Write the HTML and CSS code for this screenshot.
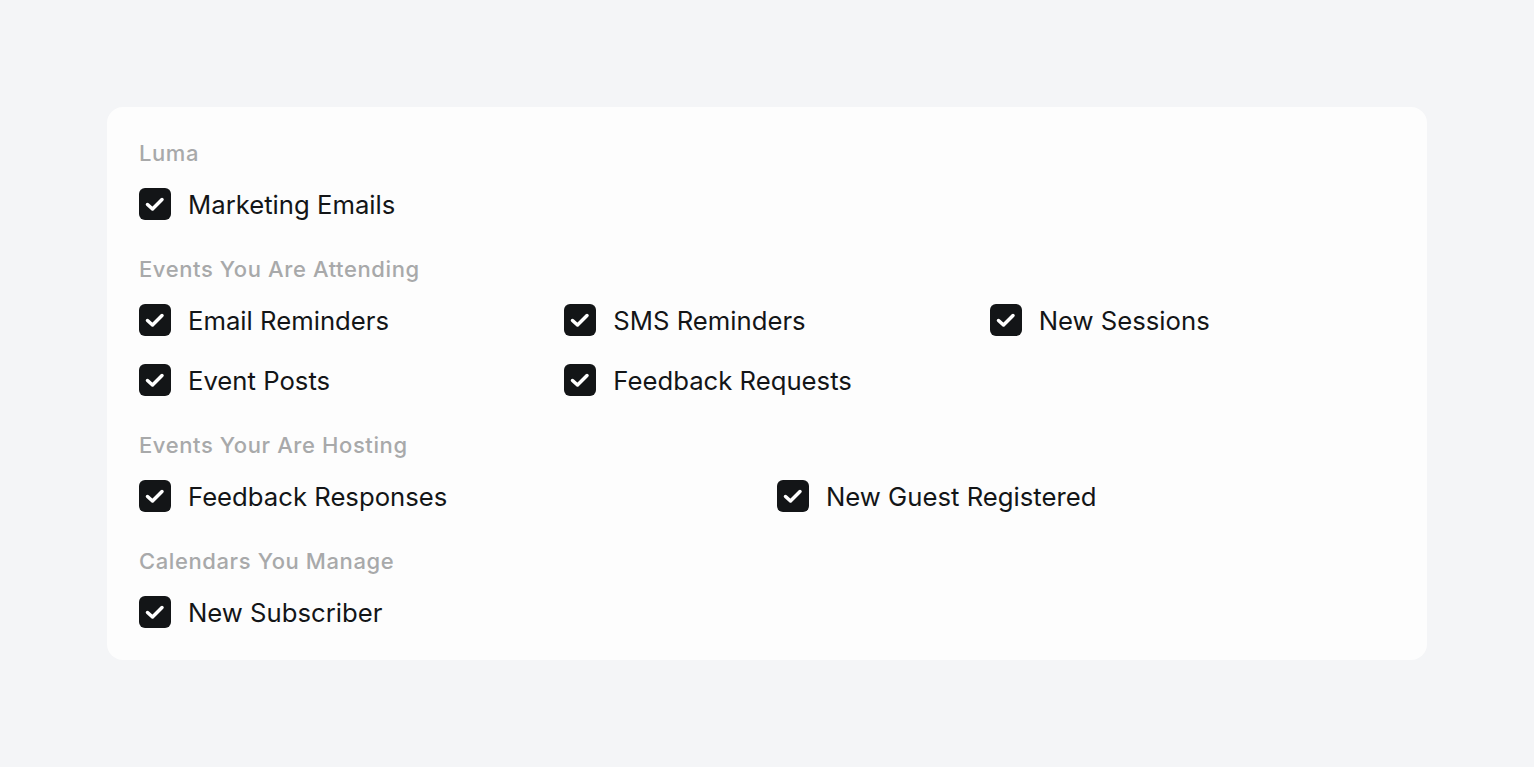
FILE: index.html
```html
<!DOCTYPE html>
<html>
    <head>
        <title>Notifications</title>
        <link rel="stylesheet" href="styles.css">
    </head>
    <body>
        <div class="card">
            <div class="section">
                <p class="label">Luma</p>
                <div class="grid">
                    <label class="item"><span class="box"><svg viewBox="0 0 32 32"><path d="M8.5 16.5l5 4.5 9.5-9.5"/></svg></span>Marketing Emails</label>
                </div>
            </div>

            <div class="section">
                <p class="label">Events You Are Attending</p>
                <div class="grid three">
                    <label class="item"><span class="box"><svg viewBox="0 0 32 32"><path d="M8.5 16.5l5 4.5 9.5-9.5"/></svg></span>Email Reminders</label>
                    <label class="item"><span class="box"><svg viewBox="0 0 32 32"><path d="M8.5 16.5l5 4.5 9.5-9.5"/></svg></span>SMS Reminders</label>
                    <label class="item"><span class="box"><svg viewBox="0 0 32 32"><path d="M8.5 16.5l5 4.5 9.5-9.5"/></svg></span>New Sessions</label>
                    <label class="item"><span class="box"><svg viewBox="0 0 32 32"><path d="M8.5 16.5l5 4.5 9.5-9.5"/></svg></span>Event Posts</label>
                    <label class="item"><span class="box"><svg viewBox="0 0 32 32"><path d="M8.5 16.5l5 4.5 9.5-9.5"/></svg></span>Feedback Requests</label>
                </div>
            </div>

            <div class="section">
                <p class="label">Events Your Are Hosting</p>
                <div class="grid two">
                    <label class="item"><span class="box"><svg viewBox="0 0 32 32"><path d="M8.5 16.5l5 4.5 9.5-9.5"/></svg></span>Feedback Responses</label>
                    <label class="item"><span class="box"><svg viewBox="0 0 32 32"><path d="M8.5 16.5l5 4.5 9.5-9.5"/></svg></span>New Guest Registered</label>
                </div>
            </div>

            <div class="section">
                <p class="label">Calendars You Manage</p>
                <div class="grid">
                    <label class="item"><span class="box"><svg viewBox="0 0 32 32"><path d="M8.5 16.5l5 4.5 9.5-9.5"/></svg></span>New Subscriber</label>
                </div>
            </div>
        </div>
    </body>
</html>
```

FILE: styles.css
```css
body{
    margin: 0;
    background-color: #f4f5f7;
    font-family: Inter, "Noto Sans", sans-serif;
    color: #131517;
}
.card{
    margin: 107px 107px 0 107px;
    background-color: #fdfdfd;
    border-radius: 16px;
    padding: 32px 32px 32px 32px;
}
.section + .section{
    margin-top: 35px;
}
.label{
    margin: 0 0 21px 0;
    font-size: 22px;
    font-weight: 500;
    letter-spacing: 0.6px;
    line-height: 28px;
    color: #a8a9aa;
}
.grid{
    display: grid;
    grid-template-columns: 1fr;
    column-gap: 20px;
    row-gap: 28px;
}
.three{
    grid-template-columns: repeat(3, 1fr);
}
.two{
    grid-template-columns: repeat(2, 1fr);
}
.item{
    display: flex;
    align-items: center;
    gap: 17px;
    height: 32px;
    font-size: 25.7px;
    cursor: pointer;
}
.box{
    width: 32px;
    height: 32px;
    flex-shrink: 0;
    border-radius: 6px;
    background-color: #131517;
}
.box svg{
    display: block;
    width: 32px;
    height: 32px;
    fill: none;
    stroke: white;
    stroke-width: 3.5;
    stroke-linecap: round;
    stroke-linejoin: round;
}
```
